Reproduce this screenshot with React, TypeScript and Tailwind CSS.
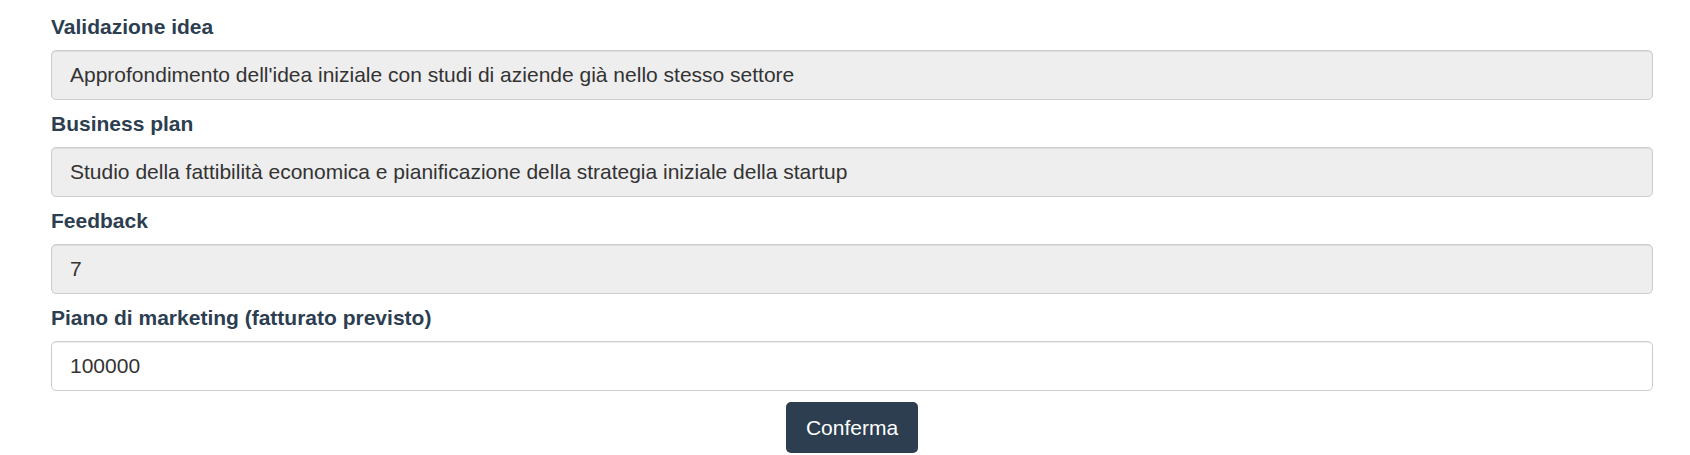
const FIELDS = [
  {
    label: "Validazione idea",
    value: "Approfondimento dell'idea iniziale con studi di aziende già nello stesso settore",
    disabled: true,
  },
  {
    label: "Business plan",
    value: "Studio della fattibilità economica e pianificazione della strategia iniziale della startup",
    disabled: true,
  },
  { label: "Feedback", value: "7", disabled: true },
  { label: "Piano di marketing (fatturato previsto)", value: "100000", disabled: false },
];

export default function App() {
  return (
    <div className="min-h-[455px] w-full bg-white font-['Liberation_Sans',Arial,sans-serif]">
      <form className="ml-[51px] mr-[37px] flex flex-col pt-[13px]" onSubmit={(e) => e.preventDefault()}>
        {FIELDS.map((f) => (
          <div key={f.label} className="flex flex-col">
            <label className="mb-[10px] text-[21px] font-bold leading-[27px] text-[#2c3e50]">{f.label}</label>
            <input
              defaultValue={f.value}
              disabled={f.disabled}
              className={
                "mb-[10px] h-[50px] w-full rounded-[5px] border border-[#cccccc] px-[18px] text-[21px] text-[#333333] shadow-[inset_0_1px_1px_rgba(0,0,0,0.075)] outline-none " +
                (f.disabled ? "bg-[#eeeeee]" : "bg-white")
              }
            />
          </div>
        ))}
        <div className="mt-[1px] flex justify-center">
          <button
            type="submit"
            className="h-[51px] w-[132px] rounded-[5px] bg-[#2c3e50] text-[21px] text-white"
          >
            Conferma
          </button>
        </div>
      </form>
    </div>
  );
}
